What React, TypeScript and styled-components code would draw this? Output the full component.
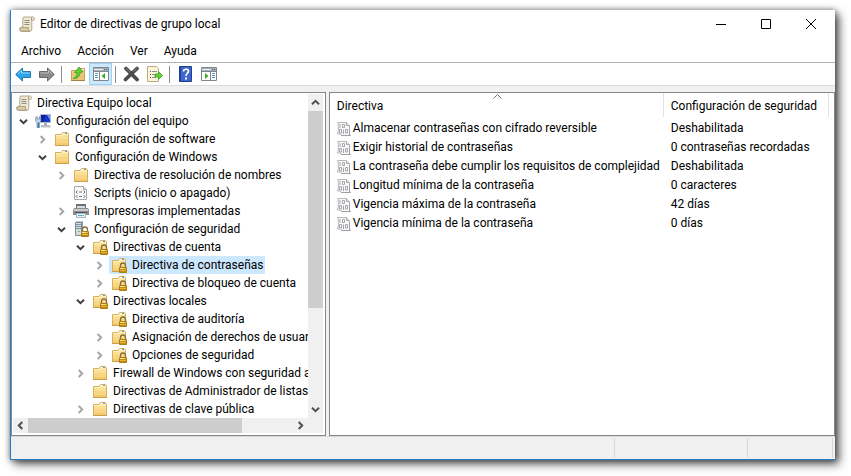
import React from 'react';
import styled, { createGlobalStyle } from 'styled-components';

const GlobalStyle = createGlobalStyle`
  * { box-sizing: border-box; }
  html, body { margin: 0; height: 100%; }
  #root { height: 100vh; }
  body {
    background: #fff;
    color: #000;
    font: 12px/18px Roboto, "Segoe UI", sans-serif;
    overflow: hidden;
  }
  button {
    font: inherit;
    color: inherit;
    background: none;
    border: 0;
    padding: 0;
    cursor: default;
  }
  svg { display: block; flex: none; }
`;

/* ---------- window frame ---------- */

const Desktop = styled.div`
  height: 100%;
  display: flex;
  padding: 10px 16px 16px 10px;
`;

const WindowFrame = styled.main`
  flex: 1;
  min-width: 0;
  display: flex;
  flex-direction: column;
  background: #fff;
  border-left: 1px solid #1a7fcf;
  border-bottom: 1px solid #1a7fcf;
  box-shadow: 0 0 6px rgba(0, 0, 0, 0.45), 4px 4px 9px rgba(0, 0, 0, 0.65);
`;

const TitleBar = styled.header`
  display: flex;
  align-items: center;
  flex: none;
  height: 28px;
  padding: 0 2px 0 8px;
`;

const Title = styled.h1`
  flex: 1;
  margin: 0 0 0 5px;
  font-size: 12px;
  font-weight: 400;
`;

const CaptionButton = styled.button`
  width: 45px;
  height: 28px;
  display: flex;
  align-items: center;
  justify-content: center;
`;

const MenuBar = styled.nav`
  display: flex;
  flex: none;
  height: 25px;
  padding-left: 10px;
  gap: 16px;
  border-bottom: 1px solid #b0b0b0;
`;

const MenuItem = styled.button`
  height: 24px;
  padding-top: 1px;
`;

const ToolBar = styled.div`
  display: flex;
  flex: none;
  align-items: center;
  height: 23px;
  padding-left: 1px;
  border-bottom: 1px solid #dcdcdc;
`;

const ToolButton = styled.button<{ $active?: boolean }>`
  width: 23px;
  height: 22px;
  display: flex;
  align-items: center;
  justify-content: center;
  background: ${(p) => (p.$active ? '#cce8ff' : 'transparent')};
  border: 1px solid ${(p) => (p.$active ? '#99d1ff' : 'transparent')};
`;

const ToolSeparator = styled.span`
  width: 1px;
  height: 17px;
  margin: 0 4px 0 3px;
  background: #8d8d8d;
`;

/* ---------- panes ---------- */

const Panes = styled.div`
  flex: 1;
  min-height: 0;
  display: flex;
  gap: 3px;
  padding-top: 6px;
  background: #f0f0f0;
`;

const TreePane = styled.section`
  flex: none;
  width: 38.2%;
  min-width: 0;
  display: flex;
  flex-direction: column;
  background: #fff;
  border: 1px solid #828790;
  padding: 1px 2px 2px 1px;
`;

const TreeBody = styled.div`
  flex: 1;
  min-height: 0;
  display: flex;
`;

const TreeView = styled.ul`
  flex: 1;
  min-width: 0;
  margin: 0;
  padding: 0;
  list-style: none;
  overflow: hidden;
`;

const TreeRow = styled.li<{ $level: number }>`
  display: flex;
  align-items: center;
  height: 18px;
  white-space: nowrap;
  padding-left: ${(p) => (p.$level === 0 ? 1 : p.$level * 19 - 18)}px;
`;

const Toggle = styled.button`
  flex: none;
  width: 19px;
  height: 18px;
  display: flex;
  align-items: center;
  justify-content: center;
`;

const ToggleSpace = styled.span`
  flex: none;
  width: 19px;
`;

const TreeLabel = styled.button<{ $selected?: boolean }>`
  flex: none;
  display: flex;
  align-items: center;
  gap: 5px;
  height: 18px;
  padding: 0 1px 0 2px;
  line-height: 18px;
  background: ${(p) => (p.$selected ? '#cce8ff' : 'transparent')};
`;

const ScrollTrack = styled.div<{ $horizontal?: boolean }>`
  flex: none;
  display: flex;
  flex-direction: ${(p) => (p.$horizontal ? 'row' : 'column')};
  width: ${(p) => (p.$horizontal ? 'auto' : '15px')};
  height: ${(p) => (p.$horizontal ? '15px' : 'auto')};
  padding-right: ${(p) => (p.$horizontal ? '15px' : '0')};
  background: #f0f0f0;
`;

const ScrollArrow = styled.button`
  flex: none;
  min-width: 15px;
  min-height: 15px;
  padding: 4px 3px;
  display: flex;
  align-items: center;
  justify-content: center;
`;

const ScrollLane = styled.div<{ $horizontal?: boolean }>`
  flex: 1;
  display: flex;
  flex-direction: ${(p) => (p.$horizontal ? 'row' : 'column')};
`;

const ScrollThumb = styled.div<{ $size: number }>`
  flex: 0 0 ${(p) => p.$size}%;
  background: #cdcdcd;
`;

const ListPane = styled.section`
  flex: 1;
  min-width: 0;
  background: #fff;
  border: 1px solid #828790;
`;

const PolicyTable = styled.table`
  width: 100%;
  border-collapse: collapse;
  table-layout: fixed;
`;

const NameCol = styled.col`
  width: 334px;
`;

const ValueCol = styled.col`
  width: 165px;
`;

const HeadCell = styled.th`
  position: relative;
  height: 26px;
  padding: 0 0 0 7px;
  text-align: left;
  font-weight: 400;
  white-space: nowrap;
  background: linear-gradient(#e2e2e2, #e2e2e2) right top / 1px 24px no-repeat;
`;

const SortMark = styled.span`
  position: absolute;
  top: 1px;
  left: 50%;
  margin-left: -4px;
`;

const Cell = styled.td`
  height: 19px;
  padding: 0 0 0 7px;
  line-height: 19px;
  white-space: nowrap;
`;

const PolicyName = styled.div`
  display: flex;
  align-items: center;
  gap: 2px;
  height: 19px;
`;

const StatusBar = styled.footer`
  flex: none;
  display: flex;
  height: 23px;
  padding: 1px 2px 1px 0;
  background: #f0f0f0;
  border-top: 1px solid #d7d7d7;
`;

const StatusCell = styled.div<{ $width?: number }>`
  flex: ${(p) => (p.$width ? `0 0 ${p.$width}px` : '1')};
  border-right: 1px solid #d7d7d7;
`;

/* ---------- icons ---------- */

const ScrollIcon = () => (
  <svg width="16" height="16" viewBox="0 0 16 16">
    <path d="M4.500 1h9.300c1.200 0 1.700.8 1.700 1.700 0 1-.6 1.600-1.500 1.600h-1.200V13c0 1.500-.8 2.300-2 2.300H2.600C1.300 15.300.7 14.300.7 13.300c0-1.200.7-1.900 1.800-1.900h1.300V3z" fill="#f1e8d2" stroke="#a3977b" strokeWidth=".8" />
    <path d="M2.500 11.500h7c-.3 1.500.1 3 1.200 3.700H2.600C1.300 15.200.8 14.300.8 13.300c0-1.200.7-1.800 1.700-1.800z" fill="#d9cba8" stroke="#94876a" strokeWidth=".7" />
    <path d="M5.500 4.500h5M5.500 6.500h5M5.500 8.500h5" stroke="#8f8c84" />
    <path d="M12.500 1.500v2.800" stroke="#a3977b" />
  </svg>
);

const FolderArt = () => (
  <>
    <path d="M1.500 3.500H7l1.500-2h5l1 1v12h-13z" fill="#fbe3a0" stroke="#d8b05c" />
    <path d="M8.500 2.500h5" stroke="#fffbe8" />
    <path d="M11 2.500h2" stroke="#4b9ad6" />
    <path d="M2 4.500h6l1.500-1H14" stroke="#fdf0c2" fill="none" />
    <path d="M2 5h12v9H2z" fill="#fbdf94" />
    <path d="M2 8h12v6H2z" fill="#f9d683" />
    <path d="M2 12h12v2H2z" fill="#f3ca70" />
    <path d="M1 14.500h14" stroke="#c9a04c" />
  </>
);

const FolderIcon = () => (
  <svg width="16" height="16" viewBox="0 0 16 16">
    <FolderArt />
  </svg>
);

const LockArt = () => (
  <>
    <path d="M9.500 10V8.500a2.500 2.500 0 0 1 5 0V10" fill="none" stroke="#86703a" strokeWidth="1.300" />
    <path d="M8.500 10.500h7v5h-7z" fill="#eab52c" stroke="#a87d1c" />
    <path d="M9 12.500h6M9 14.500h6" stroke="#c08d18" />
    <path d="M9 11.500h4" stroke="#fbe38c" />
  </>
);

const LockedFolderIcon = () => (
  <svg width="16" height="16" viewBox="0 0 16 16">
    <FolderArt />
    <LockArt />
  </svg>
);

const ServerIcon = () => (
  <svg width="16" height="16" viewBox="0 0 16 16">
    <path d="M2 1.500L3.500 0H10L8.500 1.500z" fill="#c3cbd0" />
    <path d="M8.500 1.500L10 0v13l-1.500 2z" fill="#8e989e" />
    <path d="M2.500 1.500h6v13h-6z" fill="#d5dde0" stroke="#7e8a90" />
    <path d="M3 3.500h5M3 5.500h5M3 7.500h5" stroke="#7e959f" />
    <path d="M5 10.500h1.500" stroke="#3bb54a" />
    <LockArt />
  </svg>
);

const ComputerIcon = () => (
  <svg width="16" height="16" viewBox="0 0 16 16">
    <path d="M5.500 1.500h10v8h-10z" fill="#1437c8" stroke="#b4bac2" />
    <path d="M6 2h4.500L8 9H6z" fill="#0b1d9c" />
    <path d="M12 2h3v5z" fill="#6e95f5" />
    <path d="M9 10h3v2H9z" fill="#a6abb2" />
    <path d="M6.500 12.500h8l1 1.500h-9z" fill="#d5d8dc" stroke="#9ba1a8" strokeWidth=".7" />
    <path d="M.8 4.500v3.700L2 9.500v5h2.600v-5l1.200-1.300V4.500l-1.300-1V6H2.200V3.500z" fill="#c3dcf0" stroke="#6885a1" strokeWidth=".8" />
    <path d="M3.300 9.500v5" stroke="#2c79be" strokeWidth="1.300" />
  </svg>
);

const ScriptIcon = () => (
  <svg width="16" height="16" viewBox="0 0 16 16">
    <path d="M1.500 1.500h9l3 3v10h-12z" fill="#fafafa" stroke="#a8a8a8" />
    <path d="M10.500 1.500v3h3" fill="#e4e4e4" stroke="#a8a8a8" />
    <path d="M4.500 5.500L3 7l1.500 1.500M10.500 5.500L12 7l-1.500 1.500M6 7h3M4.500 10L3 11.500 4.500 13M10.500 10l1.500 1.500-1.500 1.500M6 11.500h3" stroke="#66727c" fill="none" />
  </svg>
);

const PrinterIcon = () => (
  <svg width="16" height="16" viewBox="0 0 16 16">
    <path d="M3 1h10v4H3z" fill="#6e7174" />
    <path d="M4 3h8v2H4z" fill="#d9dbdd" />
    <path d="M1 5h14l1 2v5H0V7z" fill="#8b8f93" />
    <path d="M1 6h14v2H1z" fill="#c8cbce" />
    <path d="M2 9.500h12" stroke="#50545a" />
    <path d="M3.500 10.500h9v4h-9z" fill="#e8f4fb" stroke="#aab4bc" />
    <path d="M5 12.500h4" stroke="#4fa8df" />
    <path d="M9 12.500h2" stroke="#7fc4a0" />
  </svg>
);

const PolicyIcon = () => (
  <svg width="14" height="16" viewBox="0 0 14 16">
    <path d="M.5 1.500h9l3 3v8.500l1 1.500H4.500l-1-1.500h-3v-1l.8-1V3z" fill="#f8f8f8" stroke="#b9b9b9" />
    <path d="M9.500 1.500v3h3" fill="#e6e6e6" stroke="#a8a8a8" />
    <path d="M3 3v4M5.500 3.500h2v3h-2zM2.500 8.500h2v3.500h-2zM6.500 8.500V13M8.500 8.500h2v3.500h-2z" fill="none" stroke="#a6a6b0" />
    <path d="M4 14.500h9.500M12.500 6v8" stroke="#a2a2a2" />
  </svg>
);

const ArrowIcon = ({ forward }: { forward?: boolean }) => (
  <svg width="17" height="15" viewBox="0 0 17 15">
    {forward ? (
      <>
        <path d="M16.300 7.500L9.500 1v3.500h-8v6h8V14z" fill="#8b8b8b" stroke="#696969" strokeLinejoin="round" />
        <path d="M2.500 6h8V3.500L14 7" stroke="#b8b8b8" fill="none" />
      </>
    ) : (
      <>
        <path d="M.7 7.500L7.500 1v3.500h8v6h-8V14z" fill="#2ba3e8" stroke="#2678b0" strokeLinejoin="round" />
        <path d="M3 7l3.500-3.500V6H15" stroke="#8ed5fa" fill="none" />
      </>
    )}
  </svg>
);

const UpFolderIcon = () => (
  <svg width="16" height="16" viewBox="0 0 16 16">
    <path d="M1.500 4.500H8l1-2h5.500v12h-13z" fill="#f0cd80" stroke="#c8a25a" />
    <path d="M10 3.500h4" stroke="#fff5d5" />
    <path d="M2 7h12v7H2z" fill="#ecc578" />
    <path d="M1 14.500h14" stroke="#a98342" />
    <path d="M3 12.500c2.500-1 4-3 4.200-6L4.500 6.600 9 1l4 5-2.800.4c-.4 4-3 6.600-7.200 6.100z" fill="#5ed030" stroke="#349a1e" strokeWidth=".7" />
  </svg>
);

const PanelIcon = ({ side }: { side: 'left' | 'right' }) => (
  <svg width="16" height="14" viewBox="0 0 16 14">
    <path d="M.5.5h15v13H.5z" fill="#fff" stroke="#7e8790" />
    <path d="M1 1h14v3H1z" fill="#a9b2bb" />
    <path d="M1 2.500h9" stroke="#e9edf0" />
    <path d="M11 2.500h1M13 2.500h1" stroke="#4a545e" />
    <path d="M1 4.500h14" stroke="#7e8790" />
    {side === 'left' ? (
      <>
        <path d="M6.500 5v8" stroke="#7e8790" />
        <path d="M2 6.500h3M2 8.500h3M2 10.500h3" stroke="#5f96c9" />
        <path d="M12 6v6L8.500 9z" fill="#3aac22" />
      </>
    ) : (
      <>
        <path d="M9.500 5v8" stroke="#7e8790" />
        <path d="M11 6.500h3M11 8.500h3M11 10.500h3" stroke="#5f96c9" />
        <path d="M4 6v6l3.500-3z" fill="#3aac22" />
      </>
    )}
  </svg>
);

const DeleteIcon = () => (
  <svg width="17" height="16" viewBox="0 0 17 16">
    <path d="M3 2.500l11 11M14 2.500L2.500 13.500" stroke="#4c4c4c" strokeWidth="3.800" strokeLinecap="round" />
    <path d="M3 2.300l3.500 3.200M14 2.300l-3.500 3.200" stroke="#858585" strokeLinecap="round" />
  </svg>
);

const ExportIcon = () => (
  <svg width="16" height="16" viewBox="0 0 16 16">
    <path d="M.5.5h9l2 2v13H.5z" fill="#fdf5d8" stroke="#b9ad88" />
    <path d="M3 5.500h1M3 8.500h1M3 11.500h1" stroke="#555" />
    <path d="M5 5.500h5M5 8.500h4M5 11.500h4" stroke="#8f8f9b" />
    <path d="M8 8h3.500V5.500l4 4-4 4V11H8z" fill="#66d13c" stroke="#3aa223" strokeWidth=".8" />
  </svg>
);

const HelpIcon = () => (
  <svg width="13" height="16" viewBox="0 0 13 16">
    <path d="M.5.5h12v15H.5z" fill="#3f66cf" stroke="#20408f" />
    <path d="M1.500 1v14" stroke="#23449c" />
    <path d="M4.500 5.500c0-3 5-3 5-.2C9.500 7.200 7 7.300 7 10" stroke="#fff" strokeWidth="1.700" fill="none" />
    <path d="M6 11.500h2v2H6z" fill="#fff" />
  </svg>
);

const angles = { up: 0, right: 90, down: 180, left: 270 };

const Chevron = ({ dir, color }: { dir: keyof typeof angles; color: string }) => (
  <svg width="9" height="9" viewBox="0 0 9 9">
    <path d="M1 6.300L4.500 2.800 8 6.300" fill="none" stroke={color} strokeWidth="2" transform={`rotate(${angles[dir]} 4.500 4.500)`} />
  </svg>
);

/* ---------- data ---------- */

type TreeItem = {
  level: number;
  label: string;
  icon: React.FC;
  open?: boolean;
  selected?: boolean;
};

const treeItems: TreeItem[] = [
  { level: 0, label: 'Directiva Equipo local', icon: ScrollIcon },
  { level: 1, label: 'Configuración del equipo', icon: ComputerIcon, open: true },
  { level: 2, label: 'Configuración de software', icon: FolderIcon, open: false },
  { level: 2, label: 'Configuración de Windows', icon: FolderIcon, open: true },
  { level: 3, label: 'Directiva de resolución de nombres', icon: FolderIcon, open: false },
  { level: 3, label: 'Scripts (inicio o apagado)', icon: ScriptIcon },
  { level: 3, label: 'Impresoras implementadas', icon: PrinterIcon, open: false },
  { level: 3, label: 'Configuración de seguridad', icon: ServerIcon, open: true },
  { level: 4, label: 'Directivas de cuenta', icon: LockedFolderIcon, open: true },
  { level: 5, label: 'Directiva de contraseñas', icon: LockedFolderIcon, open: false, selected: true },
  { level: 5, label: 'Directiva de bloqueo de cuenta', icon: LockedFolderIcon, open: false },
  { level: 4, label: 'Directivas locales', icon: LockedFolderIcon, open: true },
  { level: 5, label: 'Directiva de auditoría', icon: LockedFolderIcon },
  { level: 5, label: 'Asignación de derechos de usuario', icon: LockedFolderIcon, open: false },
  { level: 5, label: 'Opciones de seguridad', icon: LockedFolderIcon, open: false },
  { level: 4, label: 'Firewall de Windows con seguridad avanzada', icon: FolderIcon, open: false },
  { level: 4, label: 'Directivas de Administrador de listas de redes', icon: FolderIcon },
  { level: 4, label: 'Directivas de clave pública', icon: FolderIcon, open: false },
];

const policies = [
  ['Almacenar contraseñas con cifrado reversible', 'Deshabilitada'],
  ['Exigir historial de contraseñas', '0 contraseñas recordadas'],
  ['La contraseña debe cumplir los requisitos de complejidad', 'Deshabilitada'],
  ['Longitud mínima de la contraseña', '0 caracteres'],
  ['Vigencia máxima de la contraseña', '42 días'],
  ['Vigencia mínima de la contraseña', '0 días'],
];

export default function App() {
  return (
    <>
      <GlobalStyle />
      <Desktop>
        <WindowFrame>
          <TitleBar>
            <ScrollIcon />
            <Title>Editor de directivas de grupo local</Title>
            <CaptionButton aria-label="Minimizar">
              <svg width="10" height="10" viewBox="0 0 10 10"><path d="M0 5.500h10" stroke="#000" /></svg>
            </CaptionButton>
            <CaptionButton aria-label="Maximizar">
              <svg width="10" height="10" viewBox="0 0 10 10"><path d="M.5.5h9v9h-9z" fill="none" stroke="#000" /></svg>
            </CaptionButton>
            <CaptionButton aria-label="Cerrar">
              <svg width="10" height="10" viewBox="0 0 10 10"><path d="M0 0l10 10M10 0L0 10" stroke="#000" /></svg>
            </CaptionButton>
          </TitleBar>

          <MenuBar>
            {['Archivo', 'Acción', 'Ver', 'Ayuda'].map((name) => (
              <MenuItem key={name}>{name}</MenuItem>
            ))}
          </MenuBar>

          <ToolBar role="toolbar">
            <ToolButton aria-label="Atrás"><ArrowIcon /></ToolButton>
            <ToolButton aria-label="Adelante"><ArrowIcon forward /></ToolButton>
            <ToolSeparator />
            <ToolButton aria-label="Subir un nivel"><UpFolderIcon /></ToolButton>
            <ToolButton aria-label="Mostrar árbol" $active><PanelIcon side="left" /></ToolButton>
            <ToolSeparator />
            <ToolButton aria-label="Eliminar"><DeleteIcon /></ToolButton>
            <ToolButton aria-label="Exportar lista"><ExportIcon /></ToolButton>
            <ToolSeparator />
            <ToolButton aria-label="Ayuda"><HelpIcon /></ToolButton>
            <ToolButton aria-label="Mostrar acciones"><PanelIcon side="right" /></ToolButton>
          </ToolBar>

          <Panes>
            <TreePane>
              <TreeBody>
                <TreeView role="tree">
                  {treeItems.map(({ level, label, icon: Icon, open, selected }) => (
                    <TreeRow key={label} $level={level} role="treeitem" aria-level={level + 1} aria-selected={!!selected}>
                      {open !== undefined && (
                        <Toggle aria-label={open ? 'Contraer' : 'Expandir'}>
                          <Chevron dir={open ? 'down' : 'right'} color={open ? '#404040' : '#a6a6a6'} />
                        </Toggle>
                      )}
                      {open === undefined && level > 0 && <ToggleSpace />}
                      <TreeLabel $selected={selected}>
                        <Icon />
                        {label}
                      </TreeLabel>
                    </TreeRow>
                  ))}
                </TreeView>
                <ScrollTrack>
                  <ScrollArrow aria-label="Arriba"><Chevron dir="up" color="#505050" /></ScrollArrow>
                  <ScrollLane><ScrollThumb $size={68} /></ScrollLane>
                  <ScrollArrow aria-label="Abajo"><Chevron dir="down" color="#505050" /></ScrollArrow>
                </ScrollTrack>
              </TreeBody>
              <ScrollTrack $horizontal>
                <ScrollArrow aria-label="Izquierda"><Chevron dir="left" color="#505050" /></ScrollArrow>
                <ScrollLane $horizontal><ScrollThumb $size={81} /></ScrollLane>
                <ScrollArrow aria-label="Derecha"><Chevron dir="right" color="#505050" /></ScrollArrow>
              </ScrollTrack>
            </TreePane>

            <ListPane>
              <PolicyTable>
                <colgroup>
                  <NameCol />
                  <ValueCol />
                  <col />
                </colgroup>
                <thead>
                  <tr>
                    <HeadCell aria-sort="ascending">
                      Directiva
                      <SortMark>
                        <svg width="9" height="5" viewBox="0 0 9 5"><path d="M.5 4.500l4-4 4 4" fill="none" stroke="#777" /></svg>
                      </SortMark>
                    </HeadCell>
                    <HeadCell>Configuración de seguridad</HeadCell>
                    <td />
                  </tr>
                </thead>
                <tbody>
                  {policies.map(([name, value]) => (
                    <tr key={name}>
                      <Cell>
                        <PolicyName>
                          <PolicyIcon />
                          {name}
                        </PolicyName>
                      </Cell>
                      <Cell>{value}</Cell>
                      <td />
                    </tr>
                  ))}
                </tbody>
              </PolicyTable>
            </ListPane>
          </Panes>

          <StatusBar>
            <StatusCell />
            <StatusCell $width={133} />
            <StatusCell $width={85} />
          </StatusBar>
        </WindowFrame>
      </Desktop>
    </>
  );
}
